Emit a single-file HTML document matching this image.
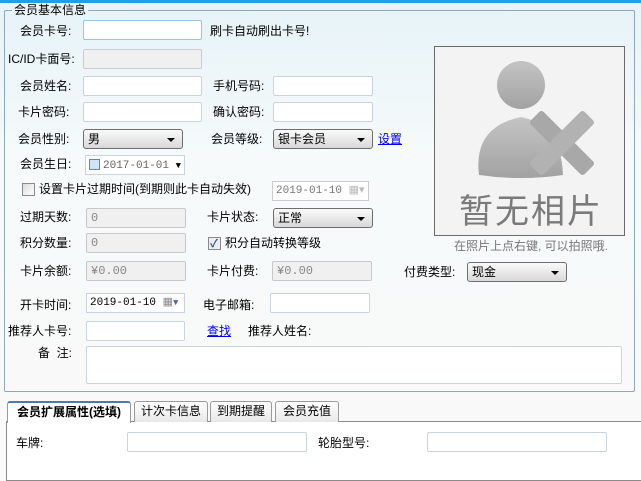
<!DOCTYPE html>
<html><head><meta charset="utf-8"><style>
*{margin:0;padding:0;box-sizing:border-box}
body{width:641px;height:474px;overflow:hidden;position:relative;font:12px "Liberation Sans","Noto Sans CJK SC",sans-serif;color:#000;background:#f8f9f8}
.top{position:absolute;left:0;top:0;width:641px;height:395px;background:linear-gradient(#e6f3f8,#f6fafb 40%,#f8f9f8)}
.bar{position:absolute;left:0;top:0;width:641px;height:3px;background:#1aa3e0}
.fs{position:absolute;left:4px;top:10px;width:631px;height:382px;border:1px solid #8fa6bd;border-radius:2px}
.lg{position:absolute;left:12px;top:3px;padding:0 2px;background:#eaf5f9;line-height:14px}
.a{position:absolute;white-space:nowrap;line-height:14px}
.in{position:absolute;background:#fff;border:1px solid #c9d4de;border-radius:2px;height:20px}
.in.f{border-color:#9cc3e0}
.dis{background:#f0f0f0;border-color:#c8c8c8;color:#888;font-family:"Liberation Mono",monospace;padding:2px 0 0 4px;line-height:14px}
.sel{position:absolute;height:20px;border:1px solid #6e6e6e;border-radius:3px;background:linear-gradient(#fafafa,#e6e6e6 60%,#d8d8d8);padding:2px 0 0 4px;line-height:14px}
.sel:after{content:"";position:absolute;right:7px;top:8px;border:4px solid transparent;border-top:4px solid #000;border-bottom:0}
.dt{position:absolute;height:20px;background:#fff;border:1px solid #c9d4de;font-family:"Liberation Mono",monospace;font-size:11px;padding:3px 0 0 3px;line-height:13px}
.lnk{color:#0000ee;text-decoration:underline}
.cb{position:absolute;width:13px;height:13px;border:1px solid #8a8a8a;background:linear-gradient(135deg,#dcdcdc,#fff)}
.tab{position:absolute;top:401px;height:21px;border:1px solid #9a9a9a;border-bottom:none;border-radius:3px 3px 0 0;background:linear-gradient(#fff,#e8e8e8);text-align:center;line-height:19px}
</style></head><body>
<div class="top"></div><div class="bar"></div>
<div class="fs"></div>
<div class="a lg" style="left:12px">会员基本信息</div>

<div class="a" style="left:20px;top:24px">会员卡号:</div>
<div class="in f" style="left:83px;top:20px;width:119px"></div>
<div class="a" style="left:210px;top:24px">刷卡自动刷出卡号!</div>

<div class="a" style="left:8px;top:52px">IC/ID卡面号:</div>
<div class="in" style="left:83px;top:49px;width:119px;background:#f0f0f0;border-color:#ccc"></div>

<div class="a" style="left:20px;top:79px">会员姓名:</div>
<div class="in" style="left:83px;top:76px;width:119px"></div>
<div class="a" style="left:213px;top:79px">手机号码:</div>
<div class="in" style="left:273px;top:76px;width:100px"></div>

<div class="a" style="left:18px;top:105px">卡片密码:</div>
<div class="in" style="left:83px;top:102px;width:119px"></div>
<div class="a" style="left:213px;top:105px">确认密码:</div>
<div class="in" style="left:273px;top:102px;width:100px"></div>

<div class="a" style="left:18px;top:132px">会员性别:</div>
<div class="sel" style="left:83px;top:129px;width:100px">男</div>
<div class="a" style="left:211px;top:132px">会员等级:</div>
<div class="sel" style="left:273px;top:129px;width:100px">银卡会员</div>
<div class="a lnk" style="left:378px;top:132px">设置</div>

<div class="a" style="left:20px;top:157px">会员生日:</div>
<div class="dt" style="left:85px;top:155px;width:100px;color:#666"><span style="display:inline-block;width:11px;height:11px;border:1px solid #5a8ab5;background:#cfe4f5;vertical-align:-2px;margin-right:3px"></span>2017-01-01 <span style="font-size:9px;color:#000">▼</span></div>

<div class="cb" style="left:22px;top:183px"></div>
<div class="a" style="left:39px;top:182px">设置卡片过期时间(到期则此卡自动失效)</div>
<div class="dt" style="left:272px;top:181px;width:97px;color:#777;border-color:#ccc">2019-01-10 <span style="color:#bbb">▦▾</span></div>

<div class="a" style="left:20px;top:210px">过期天数:</div>
<div class="in dis" style="left:86px;top:208px;width:100px">0</div>
<div class="a" style="left:207px;top:210px">卡片状态:</div>
<div class="sel" style="left:273px;top:208px;width:100px">正常</div>

<div class="a" style="left:20px;top:236px">积分数量:</div>
<div class="in dis" style="left:86px;top:233px;width:100px">0</div>
<div class="cb" style="left:208px;top:237px;background:#eee"><span style="position:absolute;left:1px;top:-3px;color:#3050a0;font-size:11px;font-weight:bold">✓</span></div>
<div class="a" style="left:225px;top:236px">积分自动转换等级</div>

<div class="a" style="left:20px;top:264px">卡片余额:</div>
<div class="in dis" style="left:86px;top:261px;width:100px">¥0.00</div>
<div class="a" style="left:207px;top:264px">卡片付费:</div>
<div class="in dis" style="left:272px;top:261px;width:100px">¥0.00</div>
<div class="a" style="left:404px;top:265px">付费类型:</div>
<div class="sel" style="left:467px;top:262px;width:100px">现金</div>

<div class="a" style="left:20px;top:298px">开卡时间:</div>
<div class="dt" style="left:86px;top:293px;width:99px">2019-01-10 <span style="color:#888">▦</span><span style="color:#4a6a9a;font-size:9px">▼</span></div>
<div class="a" style="left:203px;top:298px">电子邮箱:</div>
<div class="in" style="left:270px;top:293px;width:100px"></div>

<div class="a" style="left:8px;top:324px">推荐人卡号:</div>
<div class="in" style="left:86px;top:321px;width:99px"></div>
<div class="a lnk" style="left:207px;top:324px">查找</div>
<div class="a" style="left:248px;top:324px">推荐人姓名:</div>

<div class="a" style="left:38px;top:346px">备&nbsp;&nbsp;注:</div>
<div class="in" style="left:86px;top:346px;width:536px;height:38px"></div>

<div style="position:absolute;left:434px;top:46px;width:191px;height:190px;border:1px solid #6a6a6a;background:#f3f3f3;overflow:hidden">
<svg width="189" height="188" style="position:absolute;left:0;top:0">
<defs><linearGradient id="g" x1="0" y1="0" x2="0" y2="1"><stop offset="0" stop-color="#c4c4c4"/><stop offset="1" stop-color="#a2a2a2"/></linearGradient></defs>
<circle cx="86" cy="38" r="24" fill="url(#g)"/>
<path d="M44 128 Q38 80 86 70 Q126 78 128 128 Q86 134 44 128Z" fill="url(#g)"/>
<g transform="translate(127,96) rotate(45)"><rect x="-38" y="-9" width="76" height="18" rx="3" fill="#a8a8a8"/><rect x="-9" y="-38" width="18" height="76" rx="3" fill="#b2b2b2"/></g>
<text x="96" y="176" text-anchor="middle" font-size="34" fill="#7a7a7a" font-family="Noto Sans CJK SC,sans-serif" letter-spacing="2">暂无相片</text>
</svg></div>
<div class="a" style="left:454px;top:239px;color:#777">在照片上点右键, 可以拍照哦.</div>

<div style="position:absolute;left:6px;top:421px;width:640px;height:60px;border:1px solid #8a8a8a;background:#fff"></div>
<div class="tab" style="left:7px;width:124px;height:22px;background:#fff;border-top:2px solid #4a7ab0;font-weight:bold">会员扩展属性(选填)</div>
<div class="tab" style="left:134px;width:74px">计次卡信息</div>
<div class="tab" style="left:210px;width:62px">到期提醒</div>
<div class="tab" style="left:275px;width:64px">会员充值</div>
<div class="a" style="left:16px;top:436px">车牌:</div>
<div class="in" style="left:127px;top:432px;width:180px"></div>
<div class="a" style="left:318px;top:436px">轮胎型号:</div>
<div class="in" style="left:427px;top:432px;width:180px"></div>
</body></html>
